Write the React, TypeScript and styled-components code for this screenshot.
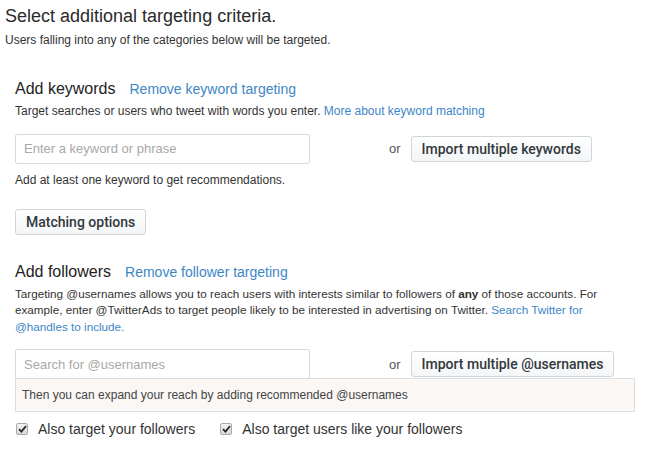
import React from "react";
import styled, { createGlobalStyle } from "styled-components";

const colors = {
  text: "#333333",
  link: "#3d86c6",
  border: "#cfd5da",
  inputBorder: "#d7dadd",
  peach: "#faf7f5",
};

const GlobalStyle = createGlobalStyle`
  body {
    margin: 0;
    background: #ffffff;
    color: ${colors.text};
    font-family: "Liberation Sans", Arial, sans-serif;
  }
`;

const Page = styled.div`
  width: 651px;
  padding-top: 4px;
`;

const Header = styled.div`
  padding: 0 5px;
`;

const Title = styled.h1`
  margin: 0;
  font-size: 18px;
  font-weight: 400;
  line-height: 24px;
  color: #2a2a2a;
`;

const Subtitle = styled.p`
  margin: 5px 0 0;
  font-size: 12px;
  line-height: 14px;
`;

const Section = styled.section<{ $top: number }>`
  margin-top: ${(p) => p.$top}px;
  padding: 0 16px 0 15px;
`;

const HeadingRow = styled.div`
  display: flex;
  align-items: baseline;
  gap: 14px;
`;

const SectionTitle = styled.h2`
  margin: 0;
  font-size: 16px;
  font-weight: 400;
  line-height: 20px;
  color: #222;
`;

const Link = styled.a`
  color: ${colors.link};
  text-decoration: none;
  cursor: pointer;
`;

const HeadingLink = styled(Link)`
  font-size: 14px;
`;

const Description = styled.p<{ $size: number }>`
  margin: 4px 0 0;
  font-size: ${(p) => p.$size}px;
  line-height: 16.5px;
  padding-right: 4px;
`;

const InputRow = styled.div`
  display: flex;
  align-items: center;
  margin-top: 14px;
`;

const TextInput = styled.input`
  box-sizing: border-box;
  width: 295px;
  height: 30px;
  margin: 0;
  padding: 0 8px;
  border: 1px solid ${colors.inputBorder};
  border-radius: 2px;
  font-family: "Liberation Sans", Arial, sans-serif;
  font-size: 13px;
  color: ${colors.text};
  outline: none;

  &::placeholder {
    color: #a8a8a8;
  }
`;

const Or = styled.span`
  margin: 0 10px 0 79px;
  font-size: 13px;
  color: #555;
`;

const Button = styled.button`
  box-sizing: border-box;
  height: 26px;
  margin: 0;
  padding: 0 10px;
  border: 1px solid ${colors.border};
  border-radius: 3px;
  background: linear-gradient(#ffffff, #f3f5f7);
  font-family: Roboto, "Liberation Sans", sans-serif;
  font-weight: 500;
  font-size: 14px;
  color: #33383c;
  cursor: pointer;
`;

const Hint = styled.p`
  margin: 9px 0 0;
  font-size: 12px;
  line-height: 14px;
`;

const ButtonRow = styled.div`
  margin-top: 22px;
`;

const RecommendBox = styled.div`
  box-sizing: border-box;
  height: 34px;
  margin-top: -1px;
  padding: 0 6px;
  display: flex;
  align-items: center;
  border: 1px solid #dedede;
  background: ${colors.peach};
  font-size: 12px;
  color: #444;
`;

const CheckRow = styled.div`
  display: flex;
  align-items: center;
  gap: 24px;
  margin-top: 9px;
`;

const CheckLabel = styled.label`
  display: flex;
  align-items: center;
  gap: 10px;
  font-size: 14px;
  color: #333;
  cursor: pointer;
`;

const CheckBox = styled.span`
  box-sizing: border-box;
  display: inline-flex;
  align-items: center;
  justify-content: center;
  width: 12px;
  height: 12px;
  margin-left: 1px;
  border: 1px solid #a9a9a9;
  border-radius: 2px;
  background: linear-gradient(#f2f2f2, #d9d9d9);
`;

const Check = () => (
  <svg width="9" height="8" viewBox="0 0 9 8">
    <path d="M1 4.2 L3.4 6.6 L8 1.2" fill="none" stroke="#2b2b2b" strokeWidth="1.8" />
  </svg>
);

const App: React.FC = (): JSX.Element => {
  return (
    <Page>
      <GlobalStyle />
      <Header>
        <Title>Select additional targeting criteria.</Title>
        <Subtitle>Users falling into any of the categories below will be targeted.</Subtitle>
      </Header>

      <Section $top={32}>
        <HeadingRow>
          <SectionTitle>Add keywords</SectionTitle>
          <HeadingLink>Remove keyword targeting</HeadingLink>
        </HeadingRow>
        <Description $size={12}>
          Target searches or users who tweet with words you enter.{" "}
          <Link>More about keyword matching</Link>
        </Description>
        <InputRow>
          <TextInput placeholder="Enter a keyword or phrase" />
          <Or>or</Or>
          <Button>Import multiple keywords</Button>
        </InputRow>
        <Hint>Add at least one keyword to get recommendations.</Hint>
        <ButtonRow>
          <Button>Matching options</Button>
        </ButtonRow>
      </Section>

      <Section $top={27}>
        <HeadingRow>
          <SectionTitle>Add followers</SectionTitle>
          <HeadingLink>Remove follower targeting</HeadingLink>
        </HeadingRow>
        <Description $size={11.7}>
          Targeting @usernames allows you to reach users with interests similar to followers of{" "}
          <b>any</b> of those accounts. For example, enter @TwitterAds to target people likely to be
          interested in advertising on Twitter.{" "}
          <Link>Search Twitter for @handles to include.</Link>
        </Description>
        <InputRow>
          <TextInput placeholder="Search for @usernames" />
          <Or>or</Or>
          <Button>Import multiple @usernames</Button>
        </InputRow>
        <RecommendBox>Then you can expand your reach by adding recommended @usernames</RecommendBox>
        <CheckRow>
          <CheckLabel>
            <CheckBox>
              <Check />
            </CheckBox>
            Also target your followers
          </CheckLabel>
          <CheckLabel>
            <CheckBox>
              <Check />
            </CheckBox>
            Also target users like your followers
          </CheckLabel>
        </CheckRow>
      </Section>
    </Page>
  );
};

export default App;
